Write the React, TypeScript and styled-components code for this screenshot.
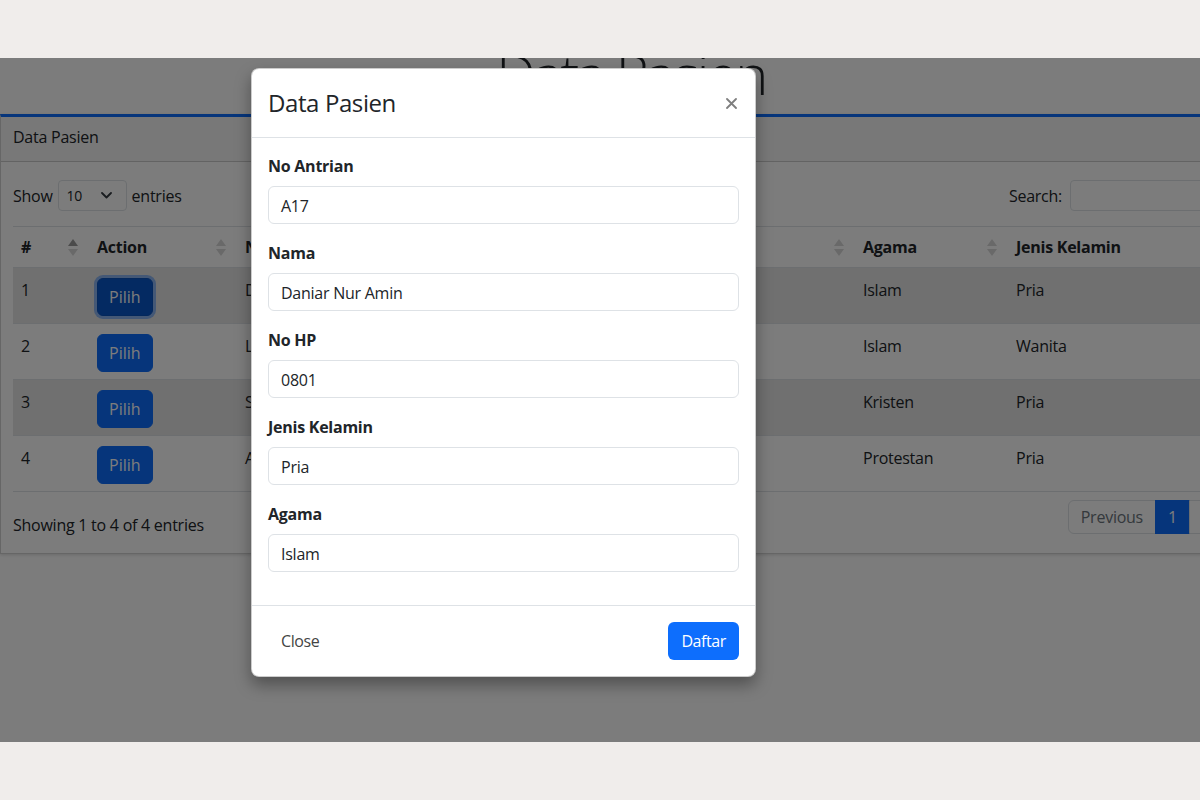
import React from "react";
import styled, { createGlobalStyle, css } from "styled-components";

const GlobalStyle = createGlobalStyle`
  * { box-sizing: border-box; }
  html, body { margin: 0; padding: 0; }
  body {
    background: #f0edeb;
    font-family: "Open Sans", "Liberation Sans", sans-serif;
    font-size: 16px;
    line-height: 1.5;
    color: #212529;
    letter-spacing: -0.25px;
  }
`;

const Screen = styled.div`
  height: 800px;
  padding-top: 58px;
`;

const Viewport = styled.div`
  position: relative;
  height: 684px;
  overflow: hidden;
  background: #fff;
`;

// the page is scrolled a little, so the big title is cut at the top
const Page = styled.div`
  width: 1262px;
  margin-top: -18px;
`;

const Heading = styled.h1`
  margin: 0 0 7px;
  font-size: 56px;
  font-weight: 300;
  line-height: 67px;
  letter-spacing: -2.5px;
  text-align: center;
`;

const Card = styled.div`
  border: 1px solid rgba(0, 0, 0, 0.175);
  border-top: 3px solid #0d6efd;
  background: #fff;
  box-shadow: 0 1px 3px rgba(0, 0, 0, 0.15);
`;

const CardHeader = styled.div`
  padding: 8px 12px 12px;
  background: rgba(0, 0, 0, 0.03);
  border-bottom: 1px solid rgba(0, 0, 0, 0.175);
`;

const CardBody = styled.div`
  padding: 18px 12px 16px;
`;

const Toolbar = styled.div`
  display: flex;
  justify-content: space-between;
  align-items: center;
  height: 31px;
  margin-bottom: 15px;
`;

const Inline = styled.label`
  display: flex;
  align-items: center;
  gap: 5px;
`;

const LengthSelect = styled.div`
  display: flex;
  align-items: center;
  justify-content: space-between;
  width: 69px;
  height: 31px;
  padding: 0 14px 0 8px;
  border: 1px solid #dee2e6;
  border-radius: 4px;
  font-size: 14px;
`;

const SearchInput = styled.div`
  width: 179px;
  height: 31px;
  margin-left: 3px;
  border: 1px solid #dee2e6;
  border-radius: 4px;
`;

const Table = styled.table`
  width: 100%;
  border-collapse: collapse;
  table-layout: fixed;
  border-top: 1px solid #dee2e6;
`;

const Th = styled.th<{ $w: number }>`
  width: ${(p) => p.$w}px;
  padding: 8px 11px 8px 8px;
  text-align: left;
  font-weight: 700;
  border-bottom: 1px solid #dee2e6;
  white-space: nowrap;
`;

const ThInner = styled.span`
  display: flex;
  justify-content: space-between;
  align-items: center;
`;

const Row = styled.tr<{ $striped?: boolean }>`
  height: 56px;
  background: ${(p) => (p.$striped ? "#e6e6e6" : "transparent")};
`;

const Td = styled.td`
  padding: 10px 8px 7px;
  vertical-align: top;
  border-bottom: 1px solid #dee2e6;
  white-space: nowrap;
  overflow: hidden;
`;

const PickButton = styled.button<{ $focused?: boolean }>`
  display: block;
  height: 38px;
  padding: 6px 11px;
  border: 1px solid #0d6efd;
  border-radius: 6px;
  background: #0d6efd;
  color: #fff;
  font: inherit;
  line-height: 24px;
  ${(p) =>
    p.$focused &&
    css`
      background: #0a58ca;
      border-color: #0a53be;
      box-shadow: 0 0 0 3px rgba(49, 132, 253, 0.5);
    `}
`;

const Footer = styled.div`
  display: flex;
  justify-content: space-between;
  align-items: flex-start;
  margin-top: 8px;
`;

const Info = styled.div`
  padding-top: 13px;
`;

const Pagination = styled.div`
  display: flex;
`;

const PageLink = styled.span<{ $active?: boolean; $disabled?: boolean; $pos?: "first" | "last" }>`
  padding: 4px 12px;
  border: 1px solid #dee2e6;
  margin-left: -1px;
  color: ${(p) => (p.$disabled ? "#6c757d" : "#0d6efd")};
  ${(p) =>
    p.$active &&
    css`
      background: #0d6efd;
      border-color: #0d6efd;
      color: #fff;
    `}
  ${(p) => p.$pos === "first" && css`border-radius: 6px 0 0 6px;`}
  ${(p) => p.$pos === "last" && css`border-radius: 0 6px 6px 0;`}
`;

const Backdrop = styled.div`
  position: absolute;
  inset: 0;
  background: rgba(0, 0, 0, 0.515);
`;

const Modal = styled.div`
  position: absolute;
  left: 251px;
  top: 10px;
  width: 505px;
  background: #fff;
  border: 1px solid rgba(0, 0, 0, 0.2);
  border-radius: 8px;
  box-shadow: 0 8px 16px rgba(0, 0, 0, 0.35);
`;

const ModalHeader = styled.div`
  display: flex;
  align-items: center;
  justify-content: space-between;
  padding: 16px;
  border-bottom: 1px solid #dee2e6;
`;

const ModalTitle = styled.h5`
  margin: 0;
  font-size: 24px;
  font-weight: 500;
  line-height: 36px;
  letter-spacing: -0.4px;
`;

const CloseX = styled.button`
  display: flex;
  align-items: center;
  justify-content: center;
  width: 24px;
  height: 24px;
  margin-right: -4px;
  padding: 0;
  border: 0;
  background: none;
  opacity: 0.5;
`;

const ModalBody = styled.div`
  padding: 16px;
`;

const Field = styled.div`
  margin-bottom: 17px;
`;

const Label = styled.label`
  display: block;
  margin-bottom: 8px;
  font-weight: 700;
`;

const Input = styled.div`
  height: 38px;
  padding: 7px 12px 5px;
  border: 1px solid #dee2e6;
  border-radius: 6px;
  color: #212529;
`;

const ModalFooter = styled.div`
  display: flex;
  justify-content: space-between;
  align-items: center;
  padding: 12px;
  border-top: 1px solid #dee2e6;
`;

const FooterButton = styled.button<{ $primary?: boolean }>`
  height: 38px;
  margin: 4px;
  padding: 6px 12px;
  border: 1px solid transparent;
  border-radius: 6px;
  font: inherit;
  line-height: 24px;
  letter-spacing: -0.4px;
  background: ${(p) => (p.$primary ? "#0d6efd" : "transparent")};
  color: ${(p) => (p.$primary ? "#fff" : "#444")};
`;

function SortIcon({ active }: { active?: boolean }) {
  return (
    <svg width="10" height="17" viewBox="0 0 10 17">
      <polygon points="5,0 10,7 0,7" fill={active ? "#9b9b9b" : "#d8d8d8"} />
      <polygon points="0,10 10,10 5,17" fill="#d8d8d8" />
    </svg>
  );
}

const columns = [
  { title: "#", w: 76, active: true },
  { title: "Action", w: 148 },
  { title: "Nama", w: 309 },
  { title: "No HP", w: 309 },
  { title: "Agama", w: 153 },
  { title: "Jenis Kelamin", w: 241, noIcon: true },
];

const patients = [
  { no: 1, nama: "Daniar Nur Amin", hp: "0801", agama: "Islam", jk: "Pria" },
  { no: 2, nama: "Lestari Wulandari", hp: "0812", agama: "Islam", jk: "Wanita" },
  { no: 3, nama: "Stefanus Hadi", hp: "0813", agama: "Kristen", jk: "Pria" },
  { no: 4, nama: "Andreas Budi", hp: "0814", agama: "Protestan", jk: "Pria" },
];

const fields = [
  { label: "No Antrian", value: "A17" },
  { label: "Nama", value: "Daniar Nur Amin" },
  { label: "No HP", value: "0801" },
  { label: "Jenis Kelamin", value: "Pria" },
  { label: "Agama", value: "Islam" },
];

export default function App() {
  return (
    <>
      <GlobalStyle />
      <Screen>
        <Viewport>
          <Page>
            <Heading>Data Pasien</Heading>
            <Card>
              <CardHeader>Data Pasien</CardHeader>
              <CardBody>
                <Toolbar>
                  <Inline>
                    Show
                    <LengthSelect>
                      <span>10</span>
                      <svg width="11" height="7" viewBox="0 0 11 7">
                        <path d="M1 1l4.5 4.5L10 1" fill="none" stroke="#343a40" strokeWidth="1.8" strokeLinecap="round" strokeLinejoin="round" />
                      </svg>
                    </LengthSelect>
                    entries
                  </Inline>
                  <Inline>
                    Search:
                    <SearchInput />
                  </Inline>
                </Toolbar>
                <Table>
                  <thead>
                    <tr>
                      {columns.map((c) => (
                        <Th key={c.title} $w={c.w}>
                          <ThInner>
                            {c.title}
                            {!c.noIcon && <SortIcon active={c.active} />}
                          </ThInner>
                        </Th>
                      ))}
                    </tr>
                  </thead>
                  <tbody>
                    {patients.map((p, i) => (
                      <Row key={p.no} $striped={i % 2 === 0}>
                        <Td>{p.no}</Td>
                        <Td>
                          <PickButton $focused={i === 0}>Pilih</PickButton>
                        </Td>
                        <Td>{p.nama}</Td>
                        <Td>{p.hp}</Td>
                        <Td>{p.agama}</Td>
                        <Td>{p.jk}</Td>
                      </Row>
                    ))}
                  </tbody>
                </Table>
                <Footer>
                  <Info>Showing 1 to 4 of 4 entries</Info>
                  <Pagination>
                    <PageLink $disabled $pos="first">Previous</PageLink>
                    <PageLink $active>1</PageLink>
                    <PageLink $disabled $pos="last">Next</PageLink>
                  </Pagination>
                </Footer>
              </CardBody>
            </Card>
          </Page>
          <Backdrop />
          <Modal>
            <ModalHeader>
              <ModalTitle>Data Pasien</ModalTitle>
              <CloseX aria-label="Close">
                <svg width="11" height="11" viewBox="0 0 11 11">
                  <path d="M1 1l9 9M10 1l-9 9" stroke="#000" strokeWidth="1.8" strokeLinecap="round" />
                </svg>
              </CloseX>
            </ModalHeader>
            <ModalBody>
              {fields.map((f) => (
                <Field key={f.label}>
                  <Label>{f.label}</Label>
                  <Input>{f.value}</Input>
                </Field>
              ))}
            </ModalBody>
            <ModalFooter>
              <FooterButton>Close</FooterButton>
              <FooterButton $primary>Daftar</FooterButton>
            </ModalFooter>
          </Modal>
        </Viewport>
      </Screen>
    </>
  );
}
